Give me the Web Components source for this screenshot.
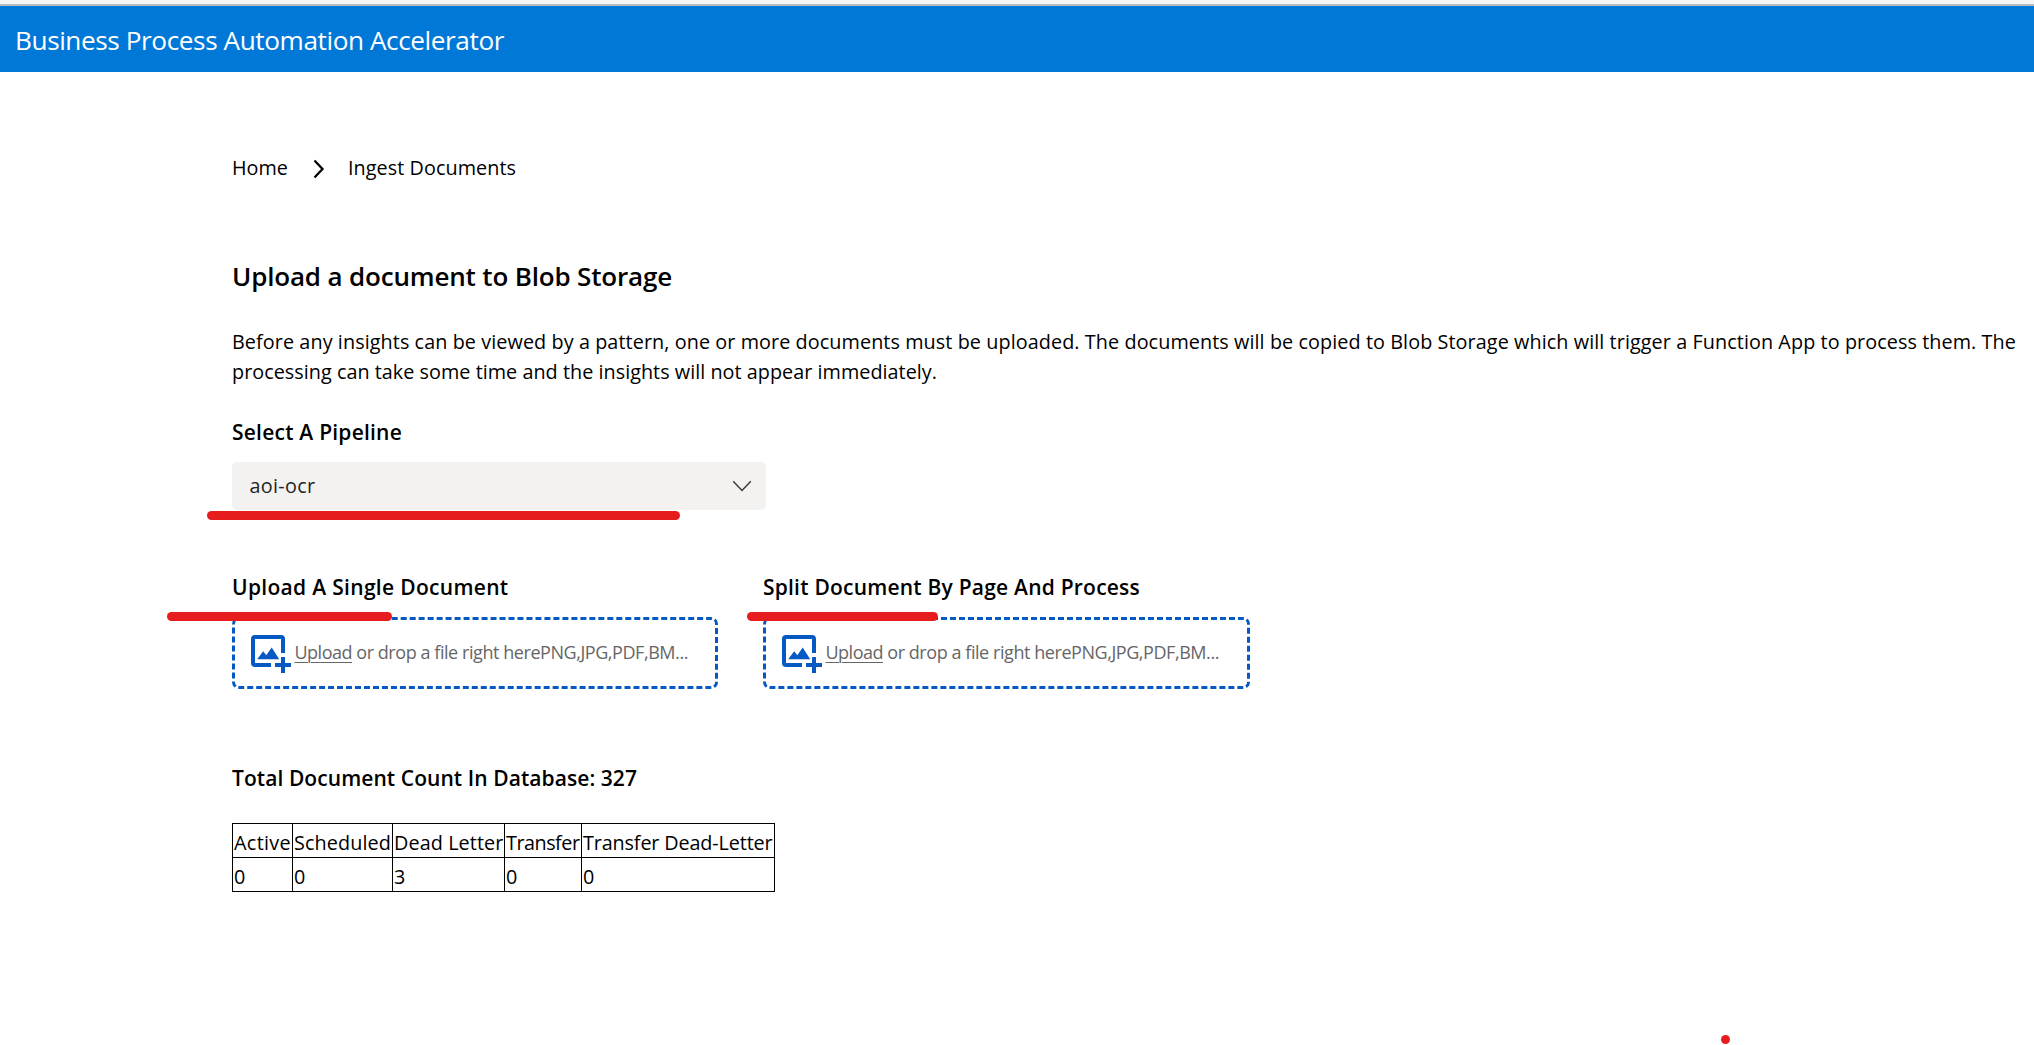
<!DOCTYPE html>
<html lang="en">
<head>
<meta charset="utf-8">
<title>Business Process Automation Accelerator</title>
<style>
html,body{margin:0;padding:0;background:#fff;overflow:hidden}
body{font-family:"Open Sans","Noto Sans",sans-serif;color:#000;height:1045px;position:relative}
</style>
</head>
<body>
<bpa-app></bpa-app>
<script>
// Single line of text whose tracking is adjusted to an intended advance width.
class FitText extends HTMLElement{
  constructor(){
    super();
    this.attachShadow({mode:'open'}).innerHTML='<style>:host{display:block;white-space:pre}span{display:inline-block;text-decoration:inherit;text-underline-offset:inherit}</style><span><slot></slot></span>';
  }
  connectedCallback(){
    const s=this.shadowRoot.querySelector('span');
    const w=parseFloat(this.getAttribute('w'));
    if(!w)return;
    const n=this.textContent.length;
    s.style.letterSpacing=((w-s.getBoundingClientRect().width)/n)+'px';
  }
}
class BpaHeader extends HTMLElement{
  constructor(){
    super();
    this.attachShadow({mode:'open'}).innerHTML=`<style>
    :host{display:block;background:#0078d7;border-top:2px solid #b9bcbe;height:66px;margin-top:4px}
    div{box-sizing:border-box;display:flex;align-items:center;height:64px;padding:3px 0 0 15px;color:#fff;font-size:26.2px;line-height:36px}
    </style><div><slot></slot></div>`;
  }
}
class BpaBreadcrumb extends HTMLElement{
  constructor(){
    super();
    this.attachShadow({mode:'open'}).innerHTML=`<style>
    :host{display:flex;height:30px;line-height:30px;font-size:19.8px}
    svg{display:block;margin:6px 23px 0 25px}
    </style><slot name="parent"></slot><svg width="12" height="20" viewBox="0 0 12 20"><path d="M1.5 1.5L9.5 10L1.5 18.5" fill="none" stroke="#000" stroke-width="2.3"/></svg><slot name="current"></slot>`;
  }
}
class BpaSelect extends HTMLElement{
  constructor(){
    super();
    this.attachShadow({mode:'open'}).innerHTML=`<style>
    :host{display:flex;box-sizing:border-box;width:534px;height:48px;border-radius:5px;background:#f3f2f1;color:#252423;padding:0 14px 0 17.5px;align-items:center;justify-content:space-between;font-size:19.8px;line-height:30px}
    svg{display:block}
    </style><slot></slot><svg width="20" height="14" viewBox="0 0 20 14"><path d="M1.2 2.3L10 11.4L18.8 2.3" fill="none" stroke="#3b3a39" stroke-width="1.5"/></svg>`;
  }
}
class BpaDrop extends HTMLElement{
  constructor(){
    super();
    this.attachShadow({mode:'open'}).innerHTML=`<style>
    :host{display:block;width:486px}
    .t{height:28px;font-size:21px;line-height:28px;font-weight:600;margin:0 0 16px}
    .box{box-sizing:border-box;display:flex;height:72px;border:3px dashed #0658c2;border-radius:7px;padding:15px 0 0 16px;color:#666}
    svg{display:block;flex:none;margin-right:2.5px}
    .l{display:flex;font-size:18px;line-height:30px;margin-top:2px}
    .u{text-decoration:underline 1px;text-underline-offset:3px}
    </style><div class="t"><slot></slot></div>
    <div class="box"><svg width="41" height="40" viewBox="0 0 41 40" fill="#0658c2">
    <path d="M4 0H30Q34 0 34 4V18H30V4H4V28H20V32H4Q0 32 0 28V4Q0 0 4 0Z"/>
    <path d="M6.2 24.3L12.2 16.2L15.3 20.2L20.7 12.5L28.2 24.3Z"/>
    <path d="M30 22H34V28H40V32H34V38H30V32H24V28H30Z"/></svg>
    <div class="l"><fit-text class="u" w="57.5">Upload</fit-text><fit-text w="336"> or drop a file right herePNG,JPG,PDF,BM...</fit-text></div></div>`;
  }
}
class BpaCounts extends HTMLElement{
  constructor(){
    super();
    this.attachShadow({mode:'open'}).innerHTML=`<style>
    :host{display:grid;grid-template-columns:59px 99px 111px 76px 192px;grid-auto-rows:33px;gap:1px;width:541px;background:#000;border:1px solid #000;font-size:19.8px;line-height:29px}
    fit-text{background:#fff;padding:4px 0 0 1px}
    </style><fit-text w="57">Active</fit-text><fit-text w="97">Scheduled</fit-text><fit-text w="109.5">Dead Letter</fit-text><fit-text w="73.5">Transfer</fit-text><fit-text w="189.5">Transfer Dead-Letter</fit-text>
    <fit-text>0</fit-text><fit-text>0</fit-text><fit-text>3</fit-text><fit-text>0</fit-text><fit-text>0</fit-text>`;
  }
}
// Red marker annotation drawn over the page.
class MarkerStroke extends HTMLElement{
  constructor(){
    super();
    this.attachShadow({mode:'open'}).innerHTML=`<style>:host{position:absolute;display:block;height:9px;border-radius:5px;background:#e71c1c}</style>`;
  }
}
class BpaApp extends HTMLElement{
  constructor(){
    super();
    this.attachShadow({mode:'open'}).innerHTML=`<style>
    :host{display:flow-root}
    .strip{background:#f5f5f5;display:flow-root}
    main{display:flex;flex-direction:column;padding:81px 0 0 232px}
    h2,h3,p{margin:0;font-weight:600}
    h2{font-size:26px;line-height:36px;margin-top:75px}
    p{font-size:19.8px;line-height:30px;font-weight:400;margin-top:33px}
    h3{font-size:21px;line-height:28px}
    .sel{margin-top:31px}
    bpa-select{margin:16px 0 0}
    .drops{display:flex;gap:45px;margin:63px 0 0}
    .wide{width:487px}
    .total{margin-top:75px}
    bpa-counts{margin:31px 0 0}
    </style>
    <div class="strip"><bpa-header><fit-text w="489">Business Process Automation Accelerator</fit-text></bpa-header></div>
    <main>
    <bpa-breadcrumb><fit-text slot="parent" w="56">Home</fit-text><fit-text slot="current" w="168">Ingest Documents</fit-text></bpa-breadcrumb>
    <h2><fit-text w="440">Upload a document to Blob Storage</fit-text></h2>
    <p><fit-text w="1784">Before any insights can be viewed by a pattern, one or more documents must be uploaded. The documents will be copied to Blob Storage which will trigger a Function App to process them. The</fit-text><fit-text w="705">processing can take some time and the insights will not appear immediately.</fit-text></p>
    <h3 class="sel"><fit-text w="170">Select A Pipeline</fit-text></h3>
    <bpa-select><fit-text w="66">aoi-ocr</fit-text></bpa-select>
    <div class="drops"><bpa-drop><fit-text w="276.5">Upload A Single Document</fit-text></bpa-drop><bpa-drop class="wide"><fit-text w="377">Split Document By Page And Process</fit-text></bpa-drop></div>
    <h3 class="total"><fit-text w="405">Total Document Count In Database: 327</fit-text></h3>
    <bpa-counts></bpa-counts>
    </main>
    <marker-stroke style="left:206.5px;top:510.5px;width:473.5px"></marker-stroke>
    <marker-stroke style="left:167px;top:612px;width:225px"></marker-stroke>
    <marker-stroke style="left:747px;top:612px;width:191px"></marker-stroke>
    <marker-stroke style="left:1720.5px;top:1034.5px;width:9px"></marker-stroke>`;
  }
}
customElements.define('fit-text',FitText);
customElements.define('bpa-header',BpaHeader);
customElements.define('bpa-breadcrumb',BpaBreadcrumb);
customElements.define('bpa-select',BpaSelect);
customElements.define('bpa-drop',BpaDrop);
customElements.define('bpa-counts',BpaCounts);
customElements.define('marker-stroke',MarkerStroke);
customElements.define('bpa-app',BpaApp);
</script>
</body>
</html>
